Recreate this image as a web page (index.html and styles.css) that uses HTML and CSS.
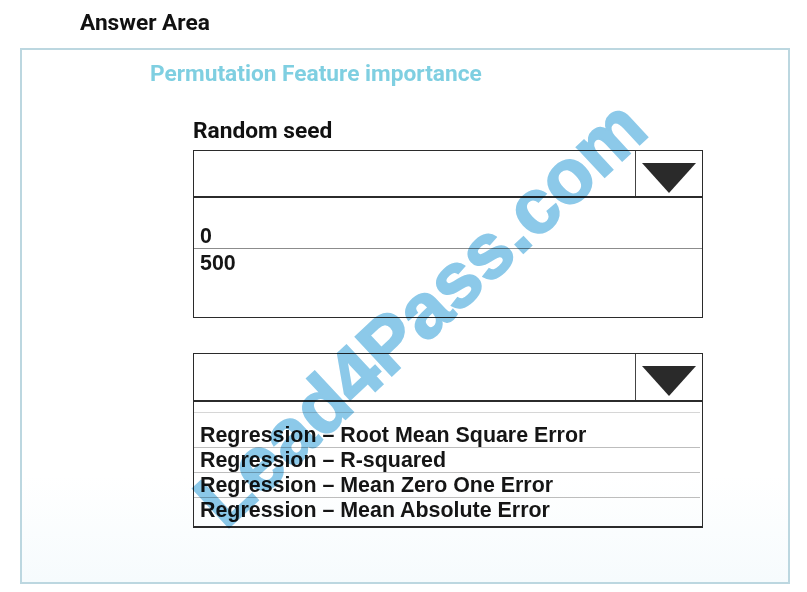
FILE: index.html
```html
<!DOCTYPE html>
<html lang="en">

<head>
    <meta charset="UTF-8">
    <meta name="viewport" content="width=device-width, initial-scale=1.0">
    <title>Answer Area</title>
    <link rel="stylesheet" href="styles.css">
</head>

<body>
    <h2 class="answer-title">Answer Area</h2>

    <div class="answer-box">
        <h3 class="section-title">Permutation Feature importance</h3>

        <div class="field">
            <div class="field-label">Random seed</div>

            <div class="dropdown">
                <div class="dropdown-head">
                    <span class="dropdown-value"></span>
                    <span class="dropdown-arrow"><span class="triangle"></span></span>
                </div>
                <ul class="dropdown-list seed-list">
                    <li>0</li>
                    <li>500</li>
                </ul>
            </div>

            <div class="dropdown metric-dropdown">
                <div class="dropdown-head">
                    <span class="dropdown-value"></span>
                    <span class="dropdown-arrow"><span class="triangle"></span></span>
                </div>
                <ul class="dropdown-list metric-list">
                    <li>Regression &ndash; Root Mean Square Error</li>
                    <li>Regression &ndash; R-squared</li>
                    <li>Regression &ndash; Mean Zero One Error</li>
                    <li>Regression &ndash; Mean Absolute Error</li>
                </ul>
            </div>
        </div>

        <div class="watermark">Lead4Pass.com</div>
    </div>
</body>

</html>
```

FILE: styles.css
```css
body {
    font-family: Roboto, "Liberation Sans", sans-serif;
    background-color: #fff;
    color: #111;
    margin: 0;
    padding: 0;
}

.answer-title {
    font-size: 22.7px;
    font-weight: 700;
    line-height: 27px;
    margin: 9px 0 0 80px;
}

.answer-box {
    position: relative;
    margin: 12px 17px 0 20px;
    height: 532px;
    border: 2px solid #bcd7e0;
    background: linear-gradient(#fff 80%, #f6fbfd);
    overflow: hidden;
}

.section-title {
    color: #7fcfe1;
    font-size: 22.7px;
    font-weight: 700;
    line-height: 27px;
    margin: 10px 0 0 128px;
}

.field {
    margin: 30px 0 0 171px;
    width: 510px;
}

.field-label {
    font-size: 22.7px;
    font-weight: 700;
    line-height: 27px;
    margin-bottom: 6px;
}

.dropdown-head {
    display: flex;
    height: 45px;
    border: 1.5px solid #2b2b2b;
    border-bottom-width: 2px;
}

.dropdown-value {
    flex: 1;
}

.dropdown-arrow {
    width: 66px;
    border-left: 1.5px solid #444;
    display: flex;
    justify-content: center;
    padding-top: 12px;
}

.triangle {
    width: 0;
    height: 0;
    border-left: 27px solid transparent;
    border-right: 27px solid transparent;
    border-top: 30px solid #2a2a2a;
}

.dropdown-list {
    list-style: none;
    margin: 0;
    border: 1.5px solid #2b2b2b;
    border-top: none;
    font-family: "Liberation Sans", Arial, sans-serif;
    font-weight: 700;
    font-size: 21.4px;
    color: #151515;
}

.seed-list {
    padding: 24px 0 42px 6px;
}

.seed-list li {
    line-height: 24px;
    padding-top: 2px;
}

.seed-list li:first-child {
    border-bottom: 1px solid #8c8c8c;
    margin-left: -6px;
    padding-left: 6px;
}

.metric-dropdown {
    margin-top: 35px;
}

.metric-dropdown .dropdown-head {
    height: 46px;
}

.metric-list {
    padding: 10px 2px 4px 0;
    border-bottom-width: 2px;
}

.metric-list li {
    line-height: 24px;
    padding-left: 6px;
    border-bottom: 1px solid #bdbdbd;
}

.metric-list li:first-child {
    border-top: 1px solid #d6d6d6;
    padding-top: 10px;
}

.metric-list li:last-child {
    border-bottom: none;
}

/* diagonal site stamp over the form */
.watermark {
    position: absolute;
    left: 398px;
    top: 263px;
    transform: translate(-50%, -50%) rotate(-43deg);
    font-family: "Liberation Sans", Arial, sans-serif;
    font-weight: 700;
    font-size: 77px;
    color: #8cc9e9;
    -webkit-text-stroke: 2px #8cc9e9;
    white-space: nowrap;
    mix-blend-mode: multiply;
    pointer-events: none;
}
```
